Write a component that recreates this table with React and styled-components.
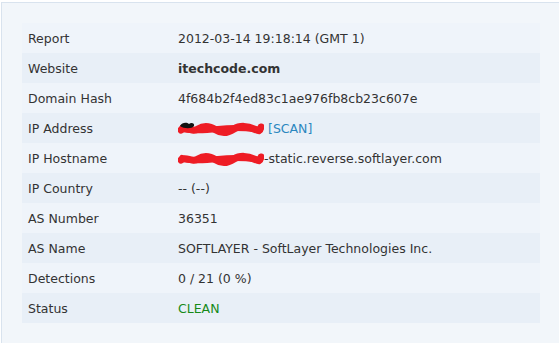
import React from "react";
import styled, { createGlobalStyle } from "styled-components";

const Global = createGlobalStyle`
  html, body { margin: 0; padding: 0; background: #ffffff; }
  body { font-family: "DejaVu Sans", Verdana, sans-serif; }
`;

const Panel = styled.div`
  margin: 2px 0 0 1px;
  height: 341px;
  box-sizing: border-box;
  background: #f2f6fa;
  border-top: 1px solid #d9e3ee;
  border-left: 1px solid #d9e3ee;
  padding: 20px 0 0 20px;
`;

const Table = styled.div`
  width: 518px;
  display: flex;
  flex-direction: column;
`;

const Row = styled.div`
  display: grid;
  grid-template-columns: 156px 1fr;
  height: 30px;
  align-items: center;
  background: ${(p) => (p.$alt ? "#e8eff7" : "#eff4fa")};
  color: #333333;
  font-size: 12.5px;
  padding-top: 1px;
  box-sizing: border-box;
`;

const Label = styled.div`
  padding-left: 6px;
`;

const Value = styled.div`
  display: flex;
  align-items: center;
  font-weight: ${(p) => (p.$bold ? "bold" : "normal")};
  color: ${(p) => p.$color || "inherit"};
  white-space: nowrap;
`;

const Link = styled.span`
  color: #2b87bf;
  margin-left: 4px;
`;

const Scribble = ({ dot }) => (
  <svg width="86" height="16" viewBox="0 0 86 16" style={{ flex: "none" }}>
    <path
      d="M3 9 C8 5, 14 12, 20 8 S32 5, 38 9 S50 12, 56 8 S70 5, 76 8 S82 10, 83 6"
      stroke="#ee1c25"
      strokeWidth="7"
      fill="none"
      strokeLinecap="round"
    />
    <path d="M4 7 C10 10, 22 10, 40 8 S70 7, 82 9" stroke="#ee1c25" strokeWidth="6" fill="none" strokeLinecap="round" />
    {dot && <path d="M2 5 C4 1, 9 1, 11 3 C13 1, 17 2, 16 5 C14 8, 6 8, 2 5 Z" fill="#111" />}
  </svg>
);

const rows = [
  ["Report", "2012-03-14 19:18:14 (GMT 1)"],
  ["Website", "itechcode.com", { bold: true }],
  ["Domain Hash", "4f684b2f4ed83c1ae976fb8cb23c607e"],
  ["IP Address", "ip"],
  ["IP Hostname", "host"],
  ["IP Country", "-- (--)"],
  ["AS Number", "36351"],
  ["AS Name", "SOFTLAYER - SoftLayer Technologies Inc."],
  ["Detections", "0 / 21 (0 %)"],
  ["Status", "CLEAN", { color: "#178a17" }],
];

export default function App() {
  return (
    <>
      <Global />
      <Panel>
        <Table>
          {rows.map(([label, value, opts = {}], i) => (
            <Row key={label} $alt={i % 2 === 1}>
              <Label>{label}</Label>
              <Value $bold={opts.bold} $color={opts.color}>
                {value === "ip" ? (
                  <>
                    <Scribble dot />
                    <Link>[SCAN]</Link>
                  </>
                ) : value === "host" ? (
                  <>
                    <Scribble />
                    <span>-static.reverse.softlayer.com</span>
                  </>
                ) : (
                  value
                )}
              </Value>
            </Row>
          ))}
        </Table>
      </Panel>
    </>
  );
}
